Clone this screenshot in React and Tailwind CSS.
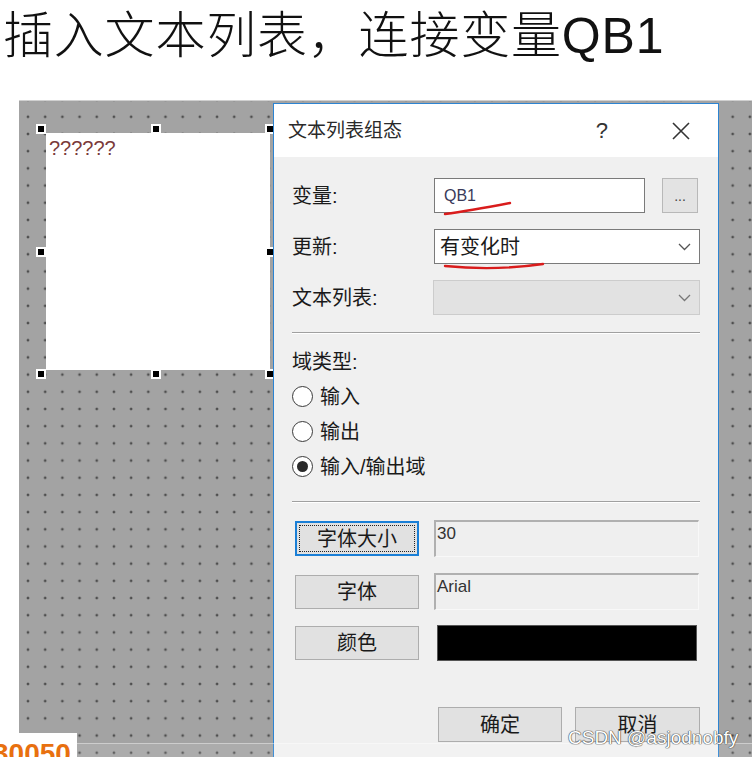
const Handle = ({ pos }) => (
  <div className={`absolute w-[10px] h-[10px] bg-black border-2 border-white ${pos}`} />
);

const Chevron = ({ color }) => (
  <svg width="13" height="8" viewBox="0 0 13 8" className="mr-[8px]">
    <polyline points="1,1 6.5,6.5 12,1" fill="none" stroke={color} strokeWidth="1.3" />
  </svg>
);

const Radio = ({ label, checked }) => (
  <div className="flex items-center h-[35px] gap-[7px]">
    <div className="w-[21px] h-[21px] rounded-full border border-[#3a3a3a] bg-white flex items-center justify-center">
      {checked && <div className="w-[11px] h-[11px] rounded-full bg-[#2a2a2a]" />}
    </div>
    <span>{label}</span>
  </div>
);

const Button = ({ label, focused, className = "" }) => (
  <div
    className={`relative flex items-center justify-center bg-[#e1e1e1] ${
      focused ? "border-2 border-[#1a7fd6]" : "border border-[#adadad]"
    } ${className}`}
  >
    {focused && <div className="absolute inset-[2px] border border-dotted border-[#222]" />}
    <span>{label}</span>
  </div>
);

const ReadField = ({ value }) => (
  <div className="w-[265px] h-full bg-[#efefef] border-t-2 border-l-2 border-[#b0b0b0] border-r border-b border-r-[#f8f8f8] border-b-[#f8f8f8] pl-[1px] pt-[2px] text-[17px] leading-[20px] text-[#333] font-['Liberation_Sans',sans-serif]">
    {value}
  </div>
);

export default function App() {
  return (
    <div className="relative w-[752px] h-[757px] overflow-hidden bg-white font-['Liberation_Sans','Noto_Sans_CJK_SC',sans-serif] text-[#1a1a1a]">
      {/* heading */}
      <h1 className="h-[100px] pl-[3px] pt-[11px] text-[50px] leading-[50px] font-light text-[#111] tracking-[0.8px] whitespace-nowrap">
        插入文本列表，连接变量QB1
      </h1>

      {/* design canvas */}
      <div className="relative ml-[19px] h-[657px] bg-[#a3a3a3] border-t border-[#d0d0d0] [background-image:radial-gradient(circle,#4e4e4e_1px,transparent_1.7px)] [background-size:17.2px_17.2px] [background-position:0.4px_7.2px]">
        <div className="ml-[27px] mt-[32px] w-[224px] h-[237px] bg-white pl-[3px] pt-[4px] text-[20px] leading-[22px] text-[#7a3a3a] font-['Liberation_Sans',sans-serif]">
          ??????
        </div>

        <Handle pos="left-[17px] top-[23px]" />
        <Handle pos="left-[132px] top-[23px]" />
        <Handle pos="left-[246px] top-[23px]" />
        <Handle pos="left-[17px] top-[146px]" />
        <Handle pos="left-[246px] top-[146px]" />
        <Handle pos="left-[17px] top-[268px]" />
        <Handle pos="left-[132px] top-[268px]" />
        <Handle pos="left-[246px] top-[268px]" />

        {/* dialog window */}
        <div className="absolute left-[254px] top-[2px] w-[446px] h-[660px] border border-[#2c84d2] bg-[#f0f0f0] text-[20px] leading-[26px]">
          <div className="h-[53px] bg-white flex items-center pl-[14px] pr-[27px]">
            <span className="text-[19px] text-[#2a2a2a]">文本列表组态</span>
            <span className="ml-auto mr-[63px] text-[22px] text-[#333]">?</span>
            <svg width="20" height="20" viewBox="0 0 20 20">
              <path d="M2 2 L18 18 M18 2 L2 18" stroke="#333" strokeWidth="1.6" />
            </svg>
          </div>

          <div className="px-[18px] pt-[21px]">
            <div className="flex items-center h-[35px]">
              <span className="w-[142px]">变量:</span>
              <div className="w-[211px] h-full bg-white border border-[#7a7a7a] flex items-center pl-[9px] text-[16px] text-[#3a3a5a]">
                QB1
              </div>
              <div className="ml-[17px] w-[36px] h-full bg-[#e3e3e3] border border-[#b8b8b8] flex items-center justify-center text-[14px] text-[#444]">
                ...
              </div>
            </div>

            <div className="flex items-center h-[35px] mt-[16px]">
              <span className="w-[142px]">更新:</span>
              <div className="flex-1 h-full bg-white border border-[#7a7a7a] flex items-center justify-between pl-[5px]">
                <span>有变化时</span>
                <Chevron color="#555" />
              </div>
            </div>

            <div className="flex items-center h-[35px] mt-[16px]">
              <span className="w-[141px]">文本列表:</span>
              <div className="flex-1 h-full bg-[#e2e2e2] border border-[#cccccc] flex items-center justify-end">
                <Chevron color="#777" />
              </div>
            </div>

            <div className="mt-[17px] border-t border-[#a0a0a0] border-b border-b-white" />

            <div className="mt-[15px] h-[26px] flex items-center">域类型:</div>
            <div className="mt-[4px]">
              <Radio label="输入" />
              <Radio label="输出" />
              <Radio label="输入/输出域" checked />
            </div>

            <div className="mt-[17px] border-t border-[#a0a0a0] border-b border-b-white" />

            <div className="flex items-center h-[37px] mt-[17px]">
              <Button label="字体大小" focused className="ml-[3px] w-[124px] h-[35px]" />
              <div className="ml-[15px] h-full">
                <ReadField value="30" />
              </div>
            </div>

            <div className="flex items-center h-[37px] mt-[16px]">
              <Button label="字体" className="ml-[3px] w-[124px] h-[34px]" />
              <div className="ml-[15px] h-full">
                <ReadField value="Arial" />
              </div>
            </div>

            <div className="flex items-center h-[36px] mt-[15px]">
              <Button label="颜色" className="ml-[3px] w-[124px] h-[34px]" />
              <div className="ml-[18px] w-[260px] h-full bg-black border border-[#555]" />
            </div>

            <div className="flex justify-end gap-[13px] mt-[46px]">
              <Button label="确定" className="w-[124px] h-[35px]" />
              <Button label="取消" className="w-[125px] h-[35px]" />
            </div>
          </div>
        </div>
      </div>

      {/* red hand-drawn underlines */}
      <svg className="absolute left-0 top-0 pointer-events-none" width="752" height="757">
        <path d="M445 214 Q468 211 510 203" fill="none" stroke="#d91c1c" strokeWidth="2.4" strokeLinecap="round" />
        <path d="M445 266 Q495 271 543 264" fill="none" stroke="#d91c1c" strokeWidth="2.4" strokeLinecap="round" />
      </svg>

      {/* video bar strip */}
      <div className="absolute left-0 top-[743px] w-full h-[14px] bg-white/10 border-t border-white/40" />

      {/* orange counter */}
      <div className="absolute left-0 top-[733px] w-[77px] h-[24px] bg-white overflow-hidden">
        <div className="-ml-[7px] mt-[7px] text-[28px] leading-none font-bold text-[#e8700f]">30050</div>
      </div>

      {/* watermark */}
      <div className="absolute left-[568px] top-[727px] text-[19px] leading-[22px] text-white [text-shadow:0_0_1px_#444,0_0_1px_#444,0_0_1px_#444] font-['Liberation_Sans',sans-serif] whitespace-nowrap">
        CSDN @asjodnobfy
      </div>
    </div>
  );
}
